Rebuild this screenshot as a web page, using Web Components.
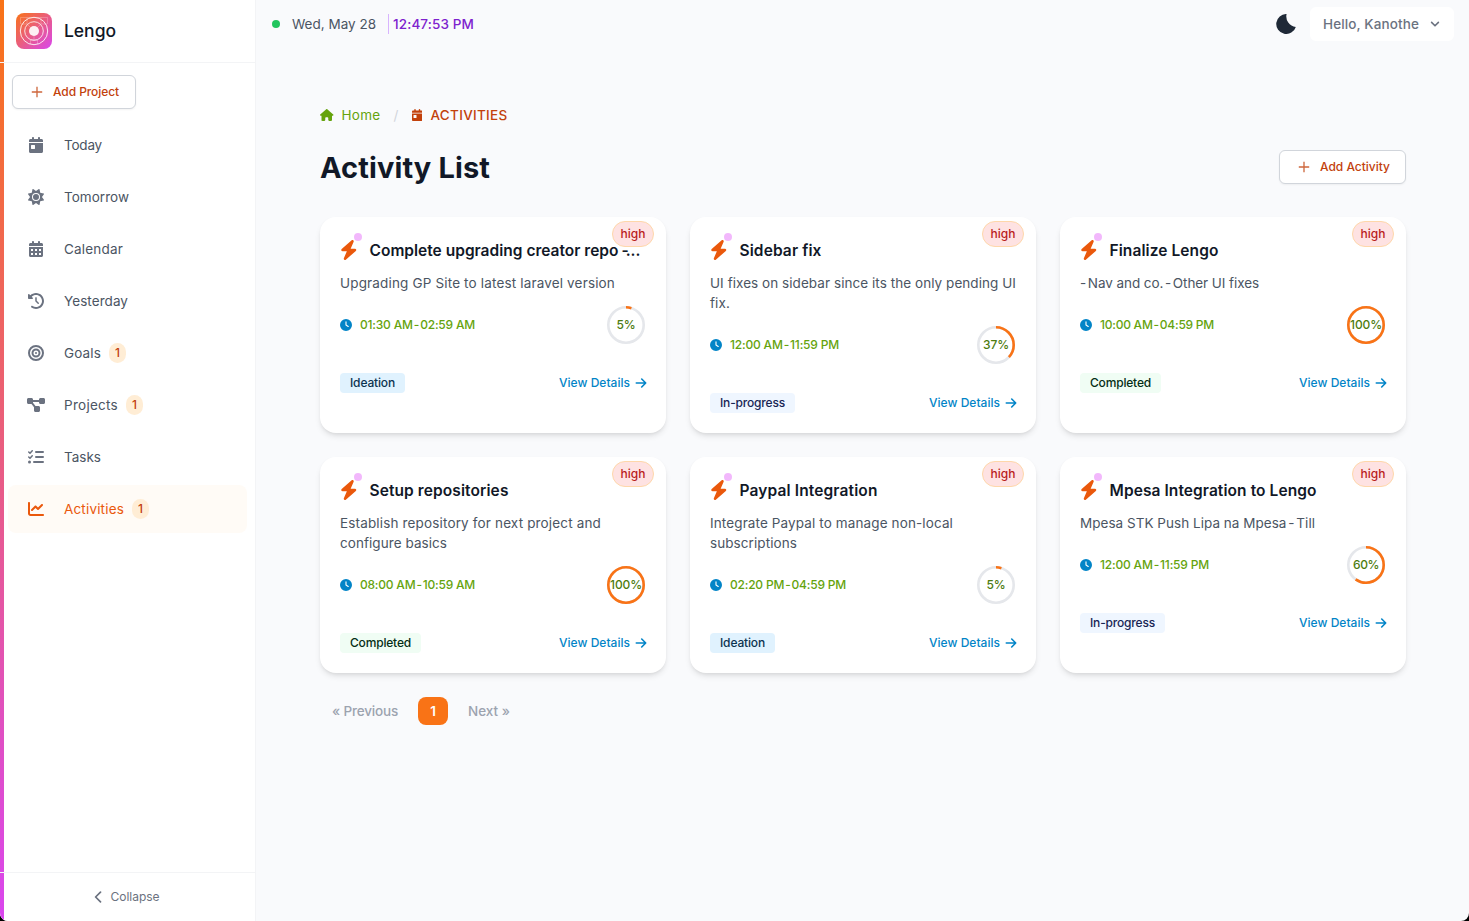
<!DOCTYPE html>
<html lang="en">
<head>
<meta charset="utf-8">
<title>Lengo - Activities</title>
<style>
html,body{margin:0;height:100%;background:#000}
body{font-family:Inter,"Noto Sans",sans-serif;font-size:13.5px;line-height:20px;overflow:hidden}
</style>
</head>
<body>
<lengo-app></lengo-app>
<script>
const ICONS = {
  day:['0 0 448 512','<path d="M128 0c17.7 0 32 14.3 32 32V64H288V32c0-17.7 14.3-32 32-32s32 14.3 32 32V64h48c26.5 0 48 21.5 48 48v48H0V112C0 85.5 21.5 64 48 64H96V32c0-17.7 14.3-32 32-32zM0 192H448V464c0 26.5-21.5 48-48 48H48c-26.5 0-48-21.5-48-48V192zm80 64c-8.8 0-16 7.2-16 16v96c0 8.8 7.2 16 16 16h96c8.8 0 16-7.2 16-16V272c0-8.8-7.2-16-16-16H80z"/>'],
  sun:['0 0 512 512','<path d="M361.5 1.2c5 2.1 8.6 6.6 9.6 11.9L391 121l107.9 19.8c5.3 1 9.8 4.6 11.9 9.6s1.5 10.7-1.6 15.2L446.9 256l62.3 90.3c3.1 4.5 3.7 10.2 1.6 15.2s-6.6 8.6-11.9 9.6L391 391 371.1 498.9c-1 5.3-4.6 9.8-9.6 11.9s-10.7 1.5-15.2-1.6L256 446.9l-90.3 62.3c-4.5 3.1-10.2 3.7-15.2 1.6s-8.6-6.6-9.6-11.9L121 391 13.1 371.1c-5.3-1-9.8-4.6-11.9-9.6s-1.5-10.7 1.6-15.2L65.1 256 2.8 165.7c-3.1-4.5-3.7-10.2-1.6-15.2s6.6-8.6 11.9-9.6L121 121 140.9 13.1c1-5.3 4.6-9.8 9.6-11.9s10.7-1.5 15.2 1.6L256 65.1 346.3 2.8c4.5-3.1 10.2-3.7 15.2-1.6zM160 256a96 96 0 1 1 192 0 96 96 0 1 1 -192 0zm224 0a128 128 0 1 0 -256 0 128 128 0 1 0 256 0z"/>'],
  days:['0 0 448 512','<path fill-rule="evenodd" d="M128 0c17.7 0 32 14.3 32 32V64H288V32c0-17.7 14.3-32 32-32s32 14.3 32 32V64h48c26.5 0 48 21.5 48 48v48H0V112C0 85.5 21.5 64 48 64H96V32c0-17.7 14.3-32 32-32zM0 192H448V464c0 26.5-21.5 48-48 48H48c-26.5 0-48-21.5-48-48V192zM64 256v64h64v-64zM192 256v64h64v-64zM320 256v64h64v-64zM64 384v64h64v-64zM192 384v64h64v-64zM320 384v64h64v-64z"/>'],
  history:['0 0 512 512','<path d="M75 75L41 41C25.9 25.9 0 36.6 0 57.9V168c0 13.3 10.7 24 24 24H134.1c21.4 0 32.1-25.9 17-41l-30.8-30.8C155 85.5 203 64 256 64c106 0 192 86 192 192s-86 192-192 192c-40.8 0-78.6-12.7-109.7-34.4c-14.5-10.1-34.4-6.6-44.6 7.9s-6.6 34.4 7.9 44.6C151.2 495 201.7 512 256 512c141.4 0 256-114.6 256-256S397.4 0 256 0C185.3 0 121.3 28.7 75 75zm181 53c-13.3 0-24 10.7-24 24V256c0 6.4 2.5 12.5 7 17l72 72c9.4 9.4 24.6 9.4 33.9 0s9.4-24.6 0-33.9l-65-65V152c0-13.3-10.7-24-24-24z"/>'],
  goal:['0 0 512 512','<g fill="none" stroke="currentColor"><circle cx="256" cy="256" r="224" stroke-width="64"/><circle cx="256" cy="256" r="112" stroke-width="64"/></g><circle cx="256" cy="256" r="32"/>'],
  project:['0 0 576 512','<path d="M0 80C0 53.5 21.5 32 48 32h96c26.5 0 48 21.5 48 48V96H384V80c0-26.5 21.5-48 48-48h96c26.5 0 48 21.5 48 48v96c0 26.5-21.5 48-48 48H432c-26.5 0-48-21.5-48-48V160H192v16c0 1.7-.1 3.4-.3 5L272 288h96c26.5 0 48 21.5 48 48v96c0 26.5-21.5 48-48 48H272c-26.5 0-48-21.5-48-48V336c0-1.7 .1-3.4 .3-5L144 224H48c-26.5 0-48-21.5-48-48V80z"/>'],
  tasks:['0 0 512 512','<g fill="none" stroke="currentColor" stroke-linecap="round" stroke-linejoin="round"><path stroke-width="48" d="M24 96l40 38 72-80M24 256l40 38 72-80"/><path stroke-width="64" d="M256 96h224M256 256h224M192 416h288"/></g><circle cx="48" cy="416" r="48"/>'],
  chart:['0 0 512 512','<path d="M64 64c0-17.7-14.3-32-32-32S0 46.3 0 64V400c0 44.2 35.8 80 80 80H480c17.7 0 32-14.3 32-32s-14.3-32-32-32H80c-8.8 0-16-7.2-16-16V64zm406.6 86.6c12.5-12.5 12.5-32.8 0-45.3s-32.8-12.5-45.3 0L320 210.7l-57.4-57.4c-12.5-12.5-32.8-12.5-45.3 0l-112 112c-12.5 12.5-12.5 32.8 0 45.3s32.8 12.5 45.3 0L240 221.3l57.4 57.4c12.5 12.5 32.8 12.5 45.3 0l128-128z"/>'],
  home:['0 0 576 512','<path d="M575.8 255.5c0 18-15 32.1-32 32.1h-32l.7 160.2c0 2.7-.2 5.4-.5 8.1V472c0 22.1-17.9 40-40 40H456c-1.1 0-2.2 0-3.3-.1c-1.4 .1-2.8 .1-4.2 .1H416 392c-22.1 0-40-17.9-40-40V448 384c0-17.7-14.3-32-32-32H256c-17.7 0-32 14.3-32 32v64 24c0 22.1-17.9 40-40 40H160 128.1c-1.5 0-3-.1-4.5-.2c-1.2 .1-2.4 .2-3.6 .2H104c-22.1 0-40-17.9-40-40V360c0-.9 0-1.9 .1-2.8V287.6H32c-18 0-32-14-32-32.1c0-9 3-17 10-24L266.4 8c7-7 15-8 22-8s15 2 21 7L564.8 231.5c8 7 12 15 11 24z"/>'],
  bolt:['0 0 448 512','<path d="M349.4 44.6c5.9-13.7 1.5-29.7-10.6-38.5s-28.6-8-39.9 1.8l-256 224c-10 8.8-13.6 22.9-8.9 35.3S50.7 288 64 288H175.5L98.6 467.4c-5.9 13.7-1.5 29.7 10.6 38.5s28.6 8 39.9-1.8l256-224c10-8.8 13.6-22.9 8.9-35.3s-16.6-20.7-30-20.7H272.5L349.4 44.6z"/>'],
  clock:['0 0 512 512','<path d="M256 0a256 256 0 1 1 0 512A256 256 0 1 1 256 0zM232 120V256c0 8 4 15.5 10.7 20l96 64c11 7.4 25.9 4.4 33.3-6.7s4.4-25.9-6.7-33.3L280 243.2V120c0-13.3-10.7-24-24-24s-24 10.7-24 24z"/>'],
  plus:['0 0 12 12','<path fill="none" stroke="currentColor" stroke-width="1.3" d="M6 .8v10.4M.8 6h10.4"/>'],
  left:['0 0 8 12','<path fill="none" stroke="currentColor" stroke-width="1.7" stroke-linecap="round" stroke-linejoin="round" d="M6.5 1.2L1.6 6l4.9 4.8"/>'],
  down:['0 0 10 10','<path fill="none" stroke="currentColor" stroke-width="1.6" stroke-linecap="round" stroke-linejoin="round" d="M1.6 3.4L5 6.8l3.4-3.4"/>'],
  arrow:['0 0 12 12','<path fill="none" stroke="currentColor" stroke-width="1.6" stroke-linecap="round" stroke-linejoin="round" d="M1.300 6h9.400M6.700 2L10.700 6l-4 4"/>'],
  moon:['0 0 20 20','<path d="M19.8 12.900A10 10 0 1 1 10.600 0 10.500 10.500 0 0 0 19.8 12.900z"/>'],
};
const define = (name, html, init) => {
  const template = document.createElement('template');
  template.innerHTML = html;
  customElements.define(name, class extends HTMLElement {
    connectedCallback() {
      if (this.shadowRoot) return;
      const root = this.attachShadow({ mode: 'open' });
      root.append(template.content.cloneNode(true));
      if (init) init(this, root);
    }
  });
};

/* Inline icon: name + height, width follows the view box. */
define('l-icon', `<style>:host{display:inline-flex;flex:none}svg{display:block;fill:currentColor}</style>`, (el, root) => {
  const [box, body] = ICONS[el.getAttribute('name')];
  const [, , w, h] = box.split(' ').map(Number), size = +el.getAttribute('size') || 16;
  root.innerHTML += `<svg viewBox="${box}" width="${size * w / h}" height="${size}">${body}</svg>`;
});

/* Text run tracked so that it fills the width it is given. */
define('l-text', `<style>:host{display:inline-block;white-space:nowrap;flex:none}</style><span><slot></slot></span>`, (el, root) => {
  const span = root.querySelector('span'), target = +el.getAttribute('w');
  const now = span.getBoundingClientRect().width;
  span.style.letterSpacing = (target - now) / el.textContent.length + 'px';
  el.style.width = target + 'px';
});

define('l-button', `<style>
:host{display:flex;align-items:center;box-sizing:border-box;height:34px;padding:0 17px 0 18px;gap:10px;border:1px solid #d1d5db;border-radius:6px;background:#fff;color:#c2410c;font-size:12px;font-weight:550;line-height:16px;box-shadow:0 1px 2px rgba(0,0,0,.05);flex:none}
l-icon{opacity:.8}</style><l-icon name="plus" size="12"></l-icon><slot></slot>`);

define('nav-item', `<style>
:host{display:flex;align-items:center;height:48px;margin:0 8px 4px 4px;border-radius:8px;color:#4b5563}
:host([active]){background:#fffbf6;color:#ea580c}
.i{width:56px;display:flex;justify-content:center;color:#6b7280}
:host([active]) .i{color:#ea580c}
.b{margin-left:8px;width:17px;height:20px;border-radius:10px;background:#ffedd5;color:#c2410c;font-size:12px;font-weight:500;text-align:center}
</style><span class="i"></span><slot></slot>`, (el, root) => {
  root.querySelector('.i').innerHTML = `<l-icon name="${el.getAttribute('icon')}" size="16"></l-icon>`;
  if (el.hasAttribute('count')) root.innerHTML += `<span class="b">${el.getAttribute('count')}</span>`;
});

define('app-logo', `<style>:host{display:block;width:36px;height:36px}svg{display:block}</style>
<svg width="36" height="36" viewBox="0 0 36 36"><defs><linearGradient id="g" x1="0" y1="0" x2="1" y2="1"><stop stop-color="#f97316"/><stop offset="1" stop-color="#d946ef"/></linearGradient></defs>
<rect width="36" height="36" rx="8" fill="url(#g)"/><g fill="none" stroke="#fff">
<circle cx="18" cy="18" r="13.7" stroke-width="1" opacity=".85"/><circle cx="18" cy="18" r="9.300" stroke-width="1" opacity=".8"/><path stroke-width=".6" opacity=".4" d="M4.500 11V4.500h27V11M11 4.500v6.500h-6M25 4.500v6.500h6M14.500 31v-4h7v4M11 11l4 4M25 11l-4 4M18 23v4"/></g><circle cx="18" cy="18" r="5" fill="#fff" opacity=".9"/></svg>`);

define('app-sidebar', `<style>
:host{display:flex;flex-direction:column;box-sizing:border-box;width:256px;height:921px;flex:none;background:linear-gradient(#f97316,#d946ef) left/4px 100% no-repeat #fff;border-right:1px solid #f3f4f6}
header{display:flex;align-items:center;gap:12px;height:62px;padding-left:16px;border-bottom:1px solid #f3f4f6;font-size:17.5px;font-weight:500;color:#111827}
.add{display:flex;padding:12px 12px 12px}
nav{flex:1;padding-left:4px}
footer{display:flex;align-items:center;justify-content:center;gap:9px;height:48px;padding-right:2px;border-top:1px solid #f3f4f6;font-size:12px;color:#6b7280}
</style>
<header><app-logo></app-logo><l-text w="52">Lengo</l-text></header>
<div class="add"><l-button style="width:124px"><l-text w="66">Add Project</l-text></l-button></div>
<nav>
<nav-item icon="day"><l-text w="38">Today</l-text></nav-item>
<nav-item icon="sun"><l-text w="65">Tomorrow</l-text></nav-item>
<nav-item icon="days"><l-text w="59">Calendar</l-text></nav-item>
<nav-item icon="history"><l-text w="64">Yesterday</l-text></nav-item>
<nav-item icon="goal" count="1"><l-text w="37">Goals</l-text></nav-item>
<nav-item icon="project" count="1"><l-text w="54">Projects</l-text></nav-item>
<nav-item icon="tasks"><l-text w="37">Tasks</l-text></nav-item>
<nav-item icon="chart" count="1" active><l-text w="60">Activities</l-text></nav-item>
</nav>
<footer><l-icon name="left" size="12"></l-icon><l-text w="49">Collapse</l-text></footer>`);

define('app-topbar', `<style>
:host{display:flex;align-items:center;height:48px;padding:0 15px 0 16px;color:#4b5563}
.dot{width:8px;height:8px;border-radius:50%;background:#22c55e;margin-right:12px}
.time{margin-left:12px;padding-left:4px;border-left:1px solid #d8b4fe;color:#7e22ce;font-weight:500}
.moon{margin-left:auto;color:#1f2937;margin-right:14px}
.user{display:flex;align-items:center;gap:11px;height:34px;padding:0 14px 0 13px;border-radius:6px;background:#fff;color:#6b7280;font-weight:500}
</style><span class="dot"></span><l-text w="84">Wed, May 28</l-text><span class="time"><l-text w="81">12:47:53 PM</l-text></span>
<l-icon class="moon" name="moon" size="20"></l-icon><span class="user"><l-text w="96">Hello, Kanothe</l-text><l-icon name="down" size="10"></l-icon></span>`);

define('bread-crumb', `<style>
:host{display:flex;align-items:center;height:20px}
.home{display:flex;align-items:center;gap:8px;color:#65a30d}
.sep{width:4px;margin:0 14px 0 13px;color:#d1d5db;text-align:center}
.here{display:flex;align-items:center;gap:8.500px;color:#c2410c;font-weight:500}
</style><span class="home"><l-icon name="home" size="12"></l-icon><l-text w="39">Home</l-text></span><span class="sep">/</span><span class="here"><l-icon name="day" size="12"></l-icon><l-text w="77">ACTIVITIES</l-text></span>`);

define('progress-ring', `<style>
:host{display:grid;place-items:center;width:40px;height:40px;flex:none;color:#4d7c0f;font-size:12px;font-weight:500}
svg,div{grid-area:1/1}div{display:flex}</style>
<svg width="40" height="40" viewBox="0 0 40 40" fill="none" stroke-width="2.6"><circle cx="20" cy="20" r="17.7" stroke="#e5e7eb"/><circle class="v" cx="20" cy="20" r="17.7" stroke="#f97316" pathLength="100" transform="rotate(-90 20 20)"/></svg><div></div>`, (el, root) => {
  const v = +el.getAttribute('value');
  root.querySelector('.v').setAttribute('stroke-dasharray', v + ' 100');
  root.querySelector('div').innerHTML = `<l-text w="${v == 100 ? 32 : v > 9 ? 26 : 19}">${v}%</l-text>`;
});

/* Tight spacing round a free-standing hyphen. */
const tight = s => s.replace(/ ?- ?(?=[A-Z0-9.])/g, m => `<span class="dash">${m}</span>`);

define('activity-card', `<style>
:host{display:block;position:relative;box-sizing:border-box;padding:20px;border-radius:16px;background:#fff;box-shadow:0 4px 6px -1px rgba(0,0,0,.1),0 2px 4px -2px rgba(0,0,0,.1)}
.high{position:absolute;right:12px;top:4px;box-sizing:border-box;width:42px;height:26px;border:1px solid #fed7aa;border-radius:13px;background:#fee2e2;color:#b91c1c;font-size:12px;font-weight:500;line-height:24px;display:flex;justify-content:center}
.title{display:flex;align-items:center;gap:12px;height:26px;font-size:15.5px;font-weight:600;color:#111827;position:relative}
.title l-icon{color:#ea580c}
.title l-text{padding-top:2px}
.title .dash{word-spacing:-1px;margin-right:-3px}
.dash{word-spacing:-2px}
.dot{position:absolute;left:14px;top:-4px;width:8px;height:8px;border-radius:50%;background:#f0abfc;opacity:.85}
.desc{margin-top:10px;color:#4b5563;display:flex;flex-direction:column}
.time{display:flex;align-items:center;margin-top:12px;gap:8px;color:#65a30d;font-size:12px;font-weight:500;height:40px}
.time>l-icon{color:#0284c7}
progress-ring{margin-left:auto}
.foot{display:flex;align-items:center;justify-content:space-between;height:20px;margin-top:28px;font-size:12px;font-weight:500}
.tag{padding:0 10px;border-radius:4px;display:flex;height:20px}
.Ideation{background:#e0f2fe;color:#0c3450}.Completed{background:#f0fdf4;color:#052e16}.In-progress{background:#eff6ff;color:#172554}
.view{display:flex;align-items:center;gap:5px;color:#0284c7;font-weight:550;margin-right:-1px}
.view l-text{margin-left:-1px}
</style><div class="body"></div>`, (el, root) => {
  const a = n => el.getAttribute(n), [title, tw] = a('name').split('|'), [t, w] = a('time').split('|');
  const status = a('status'), sw = { Ideation: 45, Completed: 61, 'In-progress': 65 }[status];
  root.querySelector('.body').innerHTML = `
<div class="title"><l-icon name="bolt" size="20"></l-icon><span class="dot"></span><l-text w="${tw}">${tight(title)}</l-text></div>
<div class="desc">${a('desc').split('/').map(l => { const [s, n] = l.split('|'); return `<l-text w="${n}">${tight(s)}</l-text>`; }).join('')}</div>
<div class="time"><l-icon name="clock" size="12"></l-icon><l-text w="${w}">${tight(t)}</l-text><progress-ring value="${a('value')}"></progress-ring></div>
<div class="foot"><span class="tag ${status}"><l-text w="${sw}">${status}</l-text></span><span class="view"><l-text w="71">View Details</l-text><l-icon name="arrow" size="12"></l-icon></span></div>
<div class="high"><l-text w="25">high</l-text></div>`;
});

define('page-nav', `<style>
:host{display:flex;align-items:center;gap:20px;height:28px;margin:24px 0 0 12px;color:#9ca3af;font-weight:500}
b{width:30px;height:28px;border-radius:8px;background:#f97316;color:#fff;font-weight:600;line-height:28px;text-align:center}
</style><l-text w="66">« Previous</l-text><b>1</b><l-text w="42">Next »</l-text>`);

define('lengo-app', `<style>
:host{display:flex;height:921px;background:#f9fafc;border-radius:0 0 8px 8px;overflow:hidden}
.main{flex:1;min-width:0}
.content{padding:57px 63px 0 64px}
.head{display:flex;align-items:center;justify-content:space-between;margin:25px 0 33px;height:34px;font-size:29px;font-weight:700;color:#111827;line-height:36px}
.head>l-text{padding-top:2px}
.grid{display:grid;grid-template-columns:repeat(3,346px);gap:24px}
</style>
<app-sidebar></app-sidebar>
<div class="main"><app-topbar></app-topbar><div class="content">
<bread-crumb></bread-crumb>
<div class="head"><l-text w="170">Activity List</l-text><l-button style="width:127px"><l-text w="70">Add Activity</l-text></l-button></div>
<div class="grid">
<activity-card name="Complete upgrading creator repo -...|271" desc="Upgrading GP Site to latest laravel version|275" time="01:30 AM - 02:59 AM|115" value="5" status="Ideation"></activity-card>
<activity-card name="Sidebar fix|82" desc="UI fixes on sidebar since its the only pending UI|306/fix.|20" time="12:00 AM - 11:59 PM|109" value="37" status="In-progress"></activity-card>
<activity-card name="Finalize Lengo|109" desc="- Nav and co. - Other UI fixes|179" time="10:00 AM - 04:59 PM|114" value="100" status="Completed"></activity-card>
<activity-card name="Setup repositories|139" desc="Establish repository for next project and|261/configure basics|107" time="08:00 AM - 10:59 AM|115" value="100" status="Completed"></activity-card>
<activity-card name="Paypal Integration|138" desc="Integrate Paypal to manage non-local|243/subscriptions|87" time="02:20 PM - 04:59 PM|116" value="5" status="Ideation"></activity-card>
<activity-card name="Mpesa Integration to Lengo|207" desc="Mpesa STK Push Lipa na Mpesa - Till|235" time="12:00 AM - 11:59 PM|109" value="60" status="In-progress"></activity-card>
</div>
<page-nav></page-nav>
</div></div>`);
</script>
</body>
</html>
